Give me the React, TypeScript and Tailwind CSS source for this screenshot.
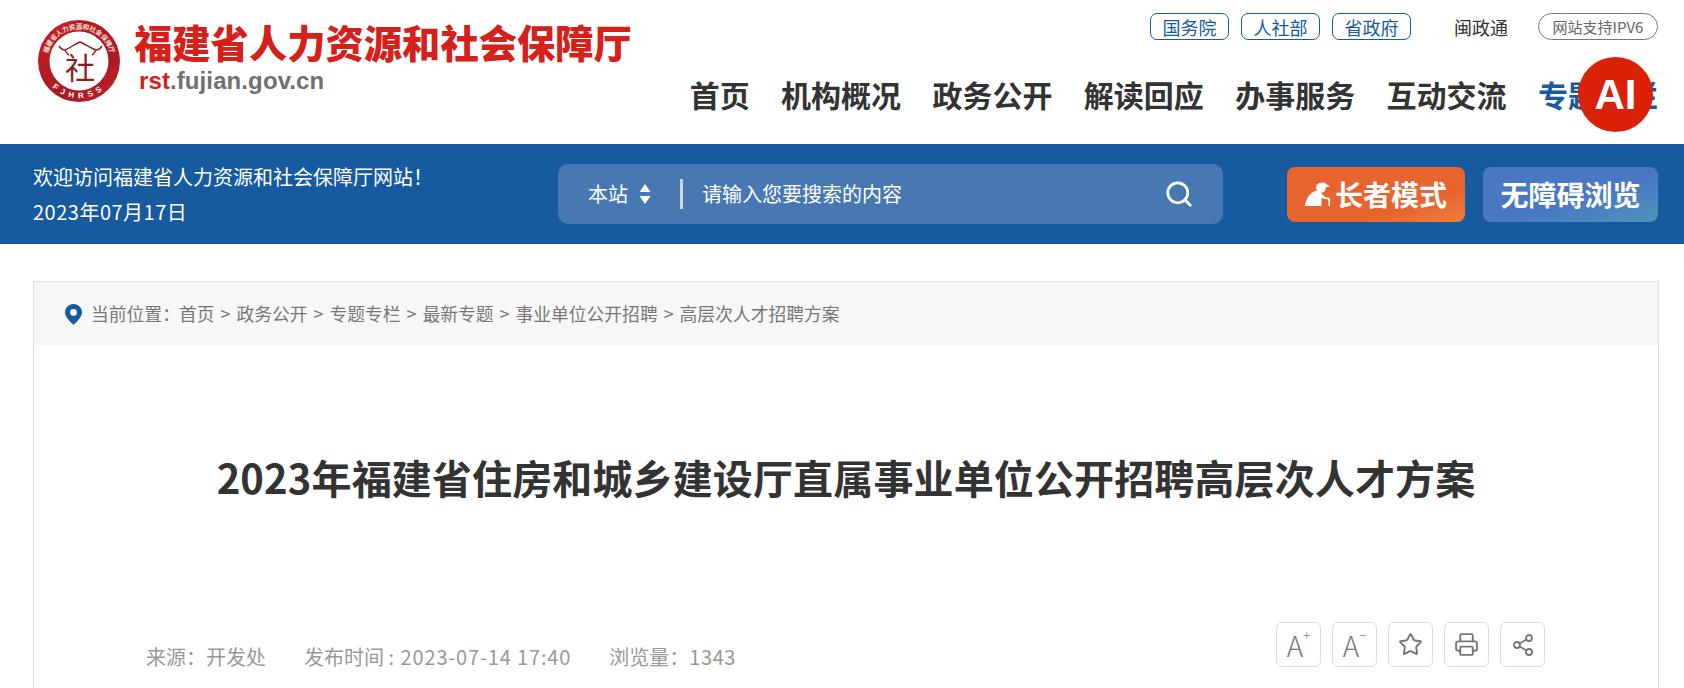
import React from 'react';
import { Search, Star, Printer, Share2 } from 'lucide-react';

const navItems = ['首页', '机构概况', '政务公开', '解读回应', '办事服务', '互动交流'];
const topLinks = ['国务院', '人社部', '省政府'];
const crumbs = ['首页', '政务公开', '专题专栏', '最新专题', '事业单位公开招聘', '高层次人才招聘方案'];

const Logo = () => (
  <svg width="84" height="84" viewBox="0 0 84 84" className="shrink-0">
    <defs>
      <linearGradient id="ring" x1="0" y1="0" x2="1" y2="1">
        <stop offset="0" stopColor="#c8202a" />
        <stop offset="0.6" stopColor="#a81820" />
        <stop offset="1" stopColor="#c2242c" />
      </linearGradient>
      <path id="topArc" d="M12 53 A32 32 0 1 1 72 53" />
      <path id="bottomArc" d="M7 56 A38 38 0 0 0 77 56" />
    </defs>
    <circle cx="42" cy="42" r="41" fill="url(#ring)" />
    <circle cx="42" cy="42" r="29.5" fill="#fff" />
    <text fontSize="6.6" fontWeight="700" fill="#f6e3d8" fontFamily="'Noto Sans CJK SC', sans-serif">
      <textPath href="#topArc" startOffset="50%" textAnchor="middle">福建省人力资源和社会保障厅</textPath>
    </text>
    <text fontFamily="'Liberation Sans', sans-serif" fontWeight="700" fontSize="8" fill="#fff" letterSpacing="4.6">
      <textPath href="#bottomArc" startOffset="50%" textAnchor="middle">FJHRSS</textPath>
    </text>
    <path d="M22 27 C24 30 26 31 28 31 C33 29 38 25 43 23 C48 25 53 29 59 31 C61 31 63 30 65 27 M28 31 C29 33 30 35 32 36 M59 31 C58 33 57 35 55 36" fill="none" stroke="#8d1c20" strokeWidth="1.4" />
    <text x="43" y="60" textAnchor="middle" fontSize="30" fill="#8d1c20" fontFamily="'Noto Sans CJK SC', sans-serif" fontWeight="400">社</text>
  </svg>
);

const ElderIcon = () => (
  <svg width="25" height="24" viewBox="0 0 25 24" fill="#fff" className="shrink-0">
    <circle cx="16" cy="6" r="4.8" />
    <path d="M11.5 3 C13.5 0 19.5 -0.5 21.5 2 L25 4.6 L20 5.4 L12 6.4 Z" />
    <path d="M0 24 C0.5 18 4 12 9 9.5 C12 8 14.5 9 16 11 L20 15 L23 15.5 C24.5 15.8 25 16.5 25 18 L25 24 L23.5 24 L23.5 18.5 C23.5 17.7 23 17.4 22 17.3 L19 17 L16.5 15.5 L16.5 24 Z" />
  </svg>
);

const ToolBox = ({ children }: { children: React.ReactNode }) => (
  <div className="w-[45px] h-[45px] flex items-center justify-center rounded-[6px] border border-[#dedede] text-[#777]">
    {children}
  </div>
);

export default function App() {
  return (
    <div className="relative h-[688px] overflow-hidden bg-white font-['Noto_Sans_CJK_SC',sans-serif]">
      <header className="h-[144px] flex justify-between pl-[37px] pr-[26px]">
        <div className="flex items-start pt-[19px] gap-[13px]">
          <Logo />
          <div className="flex flex-col">
            <div className="text-[38.3px] leading-[40px] mt-[3px] font-black text-[#d6201a] whitespace-nowrap">福建省人力资源和社会保障厅</div>
            <div className="mt-[5px] ml-[5px] text-[24px] leading-[28px] tracking-[0.1px] font-bold font-['Liberation_Sans',sans-serif] text-[#6f7071]">
              <span className="text-[#d6201a]">rst</span>.fujian.gov.cn
            </div>
          </div>
        </div>

        <div className="flex flex-col items-end">
          <div className="flex items-center mt-[13px]">
            <div className="flex gap-[12px]">
              {topLinks.map((t) => (
                <div key={t} className="w-[79px] h-[27px] flex items-center justify-center rounded-[7px] border border-[#165aa0] text-[#165aa0] text-[18px] leading-none">
                  {t}
                </div>
              ))}
            </div>
            <div className="ml-[43px] text-[18px] leading-none text-[#333]">闽政通</div>
            <div className="ml-[30px] w-[120px] h-[27px] flex items-center justify-center rounded-full border border-[#777] text-[#666] text-[15px] leading-none">
              网站支持IPV6
            </div>
          </div>
          <nav className="flex gap-[31.4px] mt-[34px] text-[30px] leading-[40px] font-bold text-[#333] whitespace-nowrap">
            {navItems.map((t) => (
              <span key={t}>{t}</span>
            ))}
            <span className="text-[#165aa0]">专题专栏</span>
          </nav>
        </div>
      </header>

      <div className="absolute left-[1578px] top-[57px] w-[75px] h-[75px] rounded-full bg-[#da2108] flex items-center justify-center text-white text-[42px] font-bold font-['Liberation_Sans',sans-serif]">
        AI
      </div>

      <div className="h-[100px] bg-[#165aa0] flex items-center text-white pl-[33px] pr-[26px]">
        <div className="w-[525px] text-[20px] leading-[35px]">
          <div>欢迎访问福建省人力资源和社会保障厅网站！</div>
          <div className="tracking-[0.5px]">2023年07月17日</div>
        </div>
        <div className="w-[665px] h-[60px] rounded-[10px] bg-[#4878b1] flex items-center pl-[30px] pr-[29px]">
          <span className="text-[20px]">本站</span>
          <svg width="12" height="20" viewBox="0 0 12 20" fill="#fff" className="ml-[11px]">
            <path d="M6 0 L11.5 8 L0.5 8 Z M0.5 12 L11.5 12 L6 20 Z" />
          </svg>
          <span className="ml-[29px] w-[3px] h-[30px] bg-[#c9d6e6]" />
          <span className="ml-[19px] text-[20px] flex-1">请输入您要搜索的内容</span>
          <Search size={30} strokeWidth={2.2} className="text-white" />
        </div>
        <div className="ml-auto flex gap-[18px]">
          <div className="w-[178px] h-[55px] rounded-[8px] bg-gradient-to-br from-[#e8642f] from-70% to-[#ee7f38] flex items-center justify-center gap-[5px] text-[28px] font-bold">
            <ElderIcon />
            <span>长者模式</span>
          </div>
          <div className="w-[175px] h-[55px] rounded-[8px] bg-gradient-to-br from-[#4a77c4] from-55% to-[#4d93b8] flex items-center justify-center text-[28px] font-bold">
            无障碍浏览
          </div>
        </div>
      </div>

      <main className="mt-[37px] ml-[33px] mr-[25px] border border-[#dedede] border-b-0 h-[420px]">
        <div className="h-[63px] bg-[#f7f7f7] flex items-center pl-[31px] text-[17.8px] text-[#777] whitespace-nowrap">
          <svg width="17" height="21" viewBox="0 0 17 21" className="shrink-0 mr-[9px] mt-[2px]">
            <path fillRule="evenodd" fill="#165aa0" d="M8.5 0 C13.2 0 17 3.7 17 8.3 C17 13 12 17.5 8.5 21 C5 17.5 0 13 0 8.3 C0 3.7 3.8 0 8.5 0 Z M8.5 5 A3.4 3.4 0 1 0 8.5 11.8 A3.4 3.4 0 1 0 8.5 5 Z" />
          </svg>
          <span className="-mr-[1px]">当前位置：</span>
          {crumbs.map((c, i) => (
            <React.Fragment key={c}>
              {i > 0 && <span className="mx-[6px]">&gt;</span>}
              <span>{c}</span>
            </React.Fragment>
          ))}
        </div>

        <h1 className="mt-[104px] text-center text-[40px] tracking-[0.13px] leading-[56px] font-bold text-[#333] whitespace-nowrap">
          2023年福建省住房和城乡建设厅直属事业单位公开招聘高层次人才方案
        </h1>

        <div className="mt-[117px] flex items-start justify-between pl-[112px] pr-[113px]">
          <div className="mt-[20px] flex gap-[38px] text-[20px] text-[#999] whitespace-nowrap">
            <span>来源：开发处</span>
            <span>发布时间&nbsp;: <span className="ml-[2px] tracking-[0.85px]">2023-07-14 17:40</span></span>
            <span>浏览量：<span className="tracking-[0.6px]">1343</span></span>
          </div>
          <div className="flex gap-[11px]">
            <ToolBox>
              <span className="text-[28px] leading-none font-light">A<sup className="text-[13px] align-[10px]">+</sup></span>
            </ToolBox>
            <ToolBox>
              <span className="text-[28px] leading-none font-light">A<sup className="text-[13px] align-[10px]">−</sup></span>
            </ToolBox>
            <ToolBox><Star size={25} strokeWidth={1.8} /></ToolBox>
            <ToolBox><Printer size={25} strokeWidth={1.8} /></ToolBox>
            <ToolBox><Share2 size={24} strokeWidth={1.8} /></ToolBox>
          </div>
        </div>
      </main>
    </div>
  );
}
